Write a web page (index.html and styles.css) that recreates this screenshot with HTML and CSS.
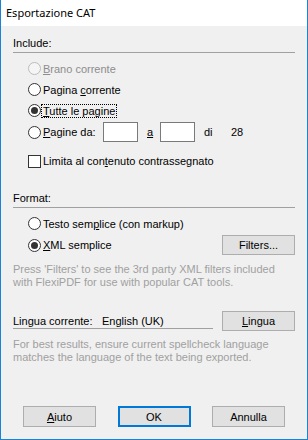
FILE: index.html
```html
<!DOCTYPE html>
<html lang="it">
<head>
  <meta charset="UTF-8" />
  <title>Esportazione CAT</title>
  <link rel="stylesheet" href="styles.css">
</head>
<body>
  <div class="window">
    <div class="titlebar">Esportazione CAT</div>
    <div class="client">
      <div class="group-label">Include:</div>
      <div class="options">
        <div class="opt disabled"><span class="radio"></span><span><u>B</u>rano corrente</span></div>
        <div class="opt"><span class="radio"></span><span>Pagina <u>c</u>orrente</span></div>
        <div class="opt"><span class="radio checked"></span><span class="focus"><u>T</u>utte le pagine</span></div>
        <div class="opt range">
          <span class="radio"></span>
          <span class="range-label"><u>P</u>agine da:</span>
          <span class="field"></span>
          <span class="to"><u>a</u></span>
          <span class="field"></span>
          <span class="of">di</span>
          <span>28</span>
        </div>
        <div class="opt check-row"><span class="check"></span><span>Limita al con<u>t</u>enuto contrassegnato</span></div>
      </div>

      <div class="group-label format">Format:</div>
      <div class="options">
        <div class="opt"><span class="radio"></span><span>Testo sem<u>p</u>lice (con markup)</span></div>
        <div class="opt xml">
          <span class="radio checked"></span><span><u>X</u>ML semplice</span>
          <button class="btn side-btn">Filters...</button>
        </div>
      </div>
      <p class="note first">Press 'Filters' to see the 3rd party XML filters included with FlexiPDF for use with popular CAT tools.</p>

      <div class="lang-row">
        <div class="lang-label"><span class="lang-key">Lingua corrente:</span><span>English (UK)</span></div>
        <button class="btn side-btn"><u>L</u>ingua</button>
      </div>
      <p class="note">For best results, ensure current spellcheck language matches the language of the text being exported.</p>

      <div class="footer">
        <button class="btn"><u>A</u>iuto</button>
        <button class="btn default">OK</button>
        <button class="btn">Annulla</button>
      </div>
    </div>
  </div>
</body>
</html>
```

FILE: styles.css
```css
* { box-sizing: border-box; }
body {
  margin: 0;
  font-family: "Liberation Sans", Arial, sans-serif;
  font-size: 11px;
  color: #000;
}
u { text-decoration: underline; text-underline-offset: 1px; }

.window {
  width: 308px;
  height: 440px;
  border: 1px solid #1883d7;
  border-top: none;
  background: #f0f0f0;
  display: flex;
  flex-direction: column;
}
.titlebar {
  height: 26px;
  background: #fff;
  padding-left: 5px;
  line-height: 25px;
  font-family: "Noto Sans", sans-serif;
  font-size: 11px;
}
.client {
  flex: 1;
  display: flex;
  flex-direction: column;
  padding: 0 12px 12px;
}

.group-label {
  margin-top: 10px;
  height: 17px;
  line-height: 15px;
  border-bottom: 1px solid #a0a0a0;
}
.group-label.format { margin-top: 20px; }

.options { margin-top: 5px; }
.opt {
  display: flex;
  align-items: center;
  height: 21px;
  padding-left: 15px;
}
.radio, .check {
  width: 13px;
  height: 13px;
  border: 1px solid #333;
  background: #fff;
  margin-right: 2px;
  flex: none;
}
.radio { border-radius: 50%; position: relative; }
.radio.checked::after {
  content: "";
  position: absolute;
  left: 2px;
  top: 2px;
  width: 7px;
  height: 7px;
  border-radius: 50%;
  background: #333;
}
.opt.disabled { color: #8d8d8d; }
.opt.disabled .radio { border-color: #bcbcbc; background: #f5f5f5; }
.focus { outline: 1px dotted #000; outline-offset: 0; padding: 0 1px; margin-left: -1px; }

.range { height: 22px; }
.range-label { width: 60px; }
.field {
  width: 35px;
  height: 20px;
  border: 1px solid #7a7a7a;
  background: #fff;
}
.to { width: 22px; padding-left: 9px; }
.of { width: 36px; padding-left: 9px; }

.check-row { margin-top: 8px; height: 20px; }
.check { border-radius: 0; }

.xml { height: 22px; }
.btn {
  height: 20px;
  width: 73px;
  border: 1px solid #adadad;
  background: #e1e1e1;
  font: inherit;
  color: #000;
  padding: 0;
}
.side-btn { margin-left: auto; }

.note {
  margin: 7px 0 0;
  color: #a0a0a0;
  line-height: 13px;
}

.lang-row {
  margin-top: 22px;
  display: flex;
  align-items: flex-start;
}
.lang-label {
  width: 200px;
  height: 18px;
  padding-top: 3px;
  line-height: 14px;
  border-bottom: 1px solid #a0a0a0;
}
.lang-key { display: inline-block; width: 89px; }

.footer {
  margin-top: auto;
  display: flex;
  justify-content: space-between;
  padding: 0 10px;
}
.footer .btn { height: 21px; }
.btn.default { border: 2px solid #0078d7; }
```
